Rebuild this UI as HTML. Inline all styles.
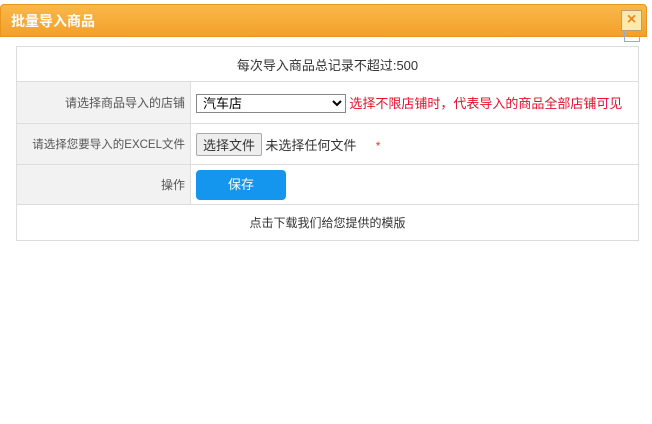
<!DOCTYPE html>
<html><head><meta charset="utf-8"><style>
body{margin:0;width:652px;height:424px;background:#fff;font-family:"Liberation Sans","Noto Sans CJK SC",sans-serif;position:relative;overflow:hidden}
.hd{position:absolute;left:0;top:4px;width:647px;height:33px;background:linear-gradient(#f9b84a,#f3a02a);border:1px solid #e8951c;border-radius:4px 4px 0 0;box-sizing:border-box;color:#fff;font-weight:bold;font-size:14px;line-height:32px;padding-left:10px}
.cl{position:absolute;left:621px;top:10px;width:21px;height:21px;background:#fde9b0;border:1px solid #b8a070;box-sizing:border-box;color:#e8891a;font-weight:bold;font-size:16px;line-height:18px;text-align:center}
.cl2{position:absolute;left:624px;top:28px;width:16px;height:14px;border:1px solid #8ab0e0;border-top:none;box-sizing:border-box}
table{position:absolute;left:16px;top:46px;width:623px;border-collapse:collapse;font-size:12px;color:#333;table-layout:fixed}
td{border:1px solid #ddd;padding:0;white-space:nowrap;overflow:hidden}
td.l{background:#f2f2f2;text-align:right;padding-right:5px;color:#555;box-sizing:border-box}
td.r{padding-left:5px}
select{width:150px;height:19px;font-size:13px;border:1px solid #888;padding:0 2px;font-family:inherit;background:#fff}
.btnf{display:inline-block;border:1px solid #aaa;background:#eee;padding:1px 6px;font-size:13px;border-radius:2px}
.save{display:inline-block;width:90px;height:30px;background:#1495ee;color:#fff;border-radius:4px;text-align:center;line-height:30px;font-size:13px}
</style></head><body>
<div class="hd">批量导入商品</div>
<div class="cl2"></div>
<div class="cl">×</div>
<table>
<colgroup><col style="width:174px"><col></colgroup>
<tr style="height:35px"><td colspan="2" style="text-align:center;font-size:13px">每次导入商品总记录不超过:500</td></tr>
<tr style="height:42px"><td class="l">请选择商品导入的店铺</td><td class="r"><select><option>汽车店</option></select> <span style="color:#e8102a;font-size:13px">选择不限店铺时，代表导入的商品全部店铺可见</span></td></tr>
<tr style="height:41px"><td class="l" style="font-size:11.5px">请选择您要导入的EXCEL文件</td><td class="r"><span class="btnf">选择文件</span> <span style="font-size:13px">未选择任何文件</span> <span style="color:#e33;margin-left:16px">*</span></td></tr>
<tr style="height:40px"><td class="l">操作</td><td class="r"><span class="save">保存</span></td></tr>
<tr style="height:36px"><td colspan="2" style="text-align:center">点击下载我们给您提供的模版</td></tr>
</table>
</body></html>
